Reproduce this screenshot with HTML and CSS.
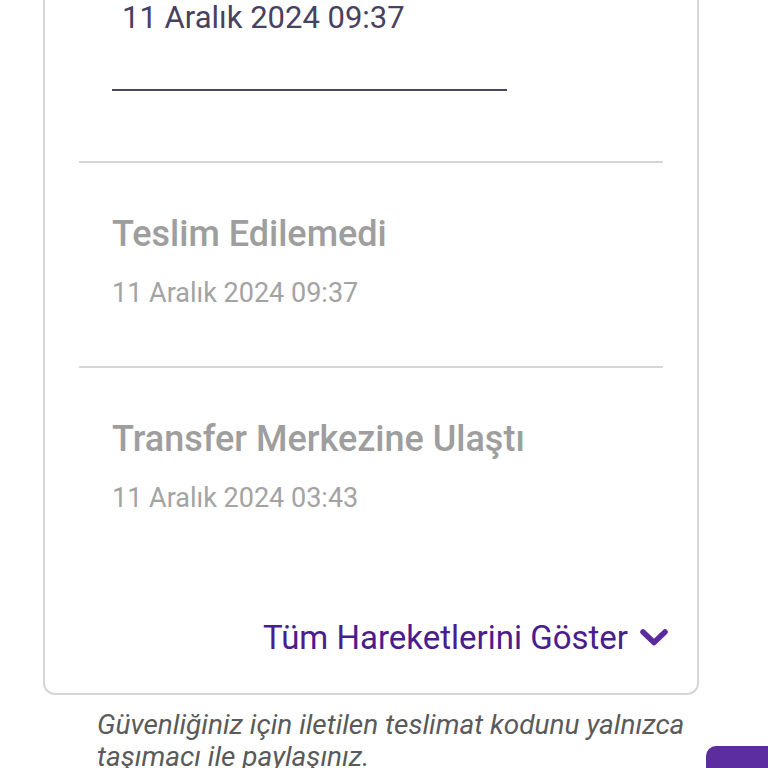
FILE: index.html
```html
<!DOCTYPE html>
<html lang="tr">
<head>
<meta charset="utf-8">
<link rel="stylesheet" href="styles.css">
</head>
<body>
<div class="page">
  <div class="card">
    <div class="item first">
      <div class="cur-date">11 Aralık 2024 09:37</div>
      <div class="underline"></div>
    </div>
    <div class="divider"></div>
    <div class="item">
      <div class="title">Teslim Edilemedi</div>
      <div class="date">11 Aralık 2024 09:37</div>
    </div>
    <div class="divider"></div>
    <div class="item">
      <div class="title">Transfer Merkezine Ulaştı</div>
      <div class="date">11 Aralık 2024 03:43</div>
    </div>
    <div class="more">
      <span class="more-text">Tüm Hareketlerini Göster</span>
      <svg class="chev" width="30" height="20" viewBox="0 0 30 20"><path d="M4 4 L15 14.5 L26 4" fill="none" stroke="#5a2a9e" stroke-width="5.5" stroke-linecap="round" stroke-linejoin="round"/></svg>
    </div>
  </div>
  <p class="note">Güvenliğiniz için iletilen teslimat kodunu yalnızca taşımacı ile paylaşınız.</p>
  <div class="fab"></div>
</div>
</body>
</html>
```
FILE: styles.css
```css
html, body {
  margin: 0;
  padding: 0;
  background: #ffffff;
  font-family: Roboto, "Noto Sans", sans-serif;
}
.page {
  position: relative;
  width: 768px;
  height: 768px;
  overflow: hidden;
}
.card {
  margin-left: 43px;
  width: 584px;
  height: 693px;
  padding: 0 34px;
  border: 2px solid #d6d6d6;
  border-top: none;
  border-radius: 0 0 12px 12px;
}
.item {
  padding-left: 33px;
}
.item.first {
  height: 161px;
}
.cur-date {
  font-size: 31px;
  line-height: 36px;
  color: #48415f;
  padding-left: 10px;
}
.underline {
  margin-top: 53px;
  width: 395px;
  height: 2px;
  background: #4a4560;
}
.divider {
  height: 2px;
  background: #d6d6d6;
}
.item:not(.first) {
  padding-top: 50px;
  height: 153px;
}
.title {
  font-size: 36px;
  line-height: 42px;
  font-weight: 500;
  color: #9e9e9e;
}
.date {
  font-size: 27px;
  line-height: 32px;
  margin-top: 22px;
  color: #a3a3a3;
}
.more {
  display: flex;
  justify-content: flex-end;
  align-items: center;
  gap: 11px;
  margin-top: 47px;
  margin-right: -6px;
}
.more-text {
  font-size: 33px;
  line-height: 40px;
  color: #4b1d8c;
}
.chev {
  display: block;
}
.note {
  margin: 14px 0 0 97px;
  width: 600px;
  font-size: 28px;
  line-height: 32px;
  font-style: italic;
  color: #5a5a5a;
}
.fab {
  position: absolute;
  left: 706px;
  top: 746px;
  width: 90px;
  height: 60px;
  border-radius: 10px;
  background: #5b2d9e;
}
```
